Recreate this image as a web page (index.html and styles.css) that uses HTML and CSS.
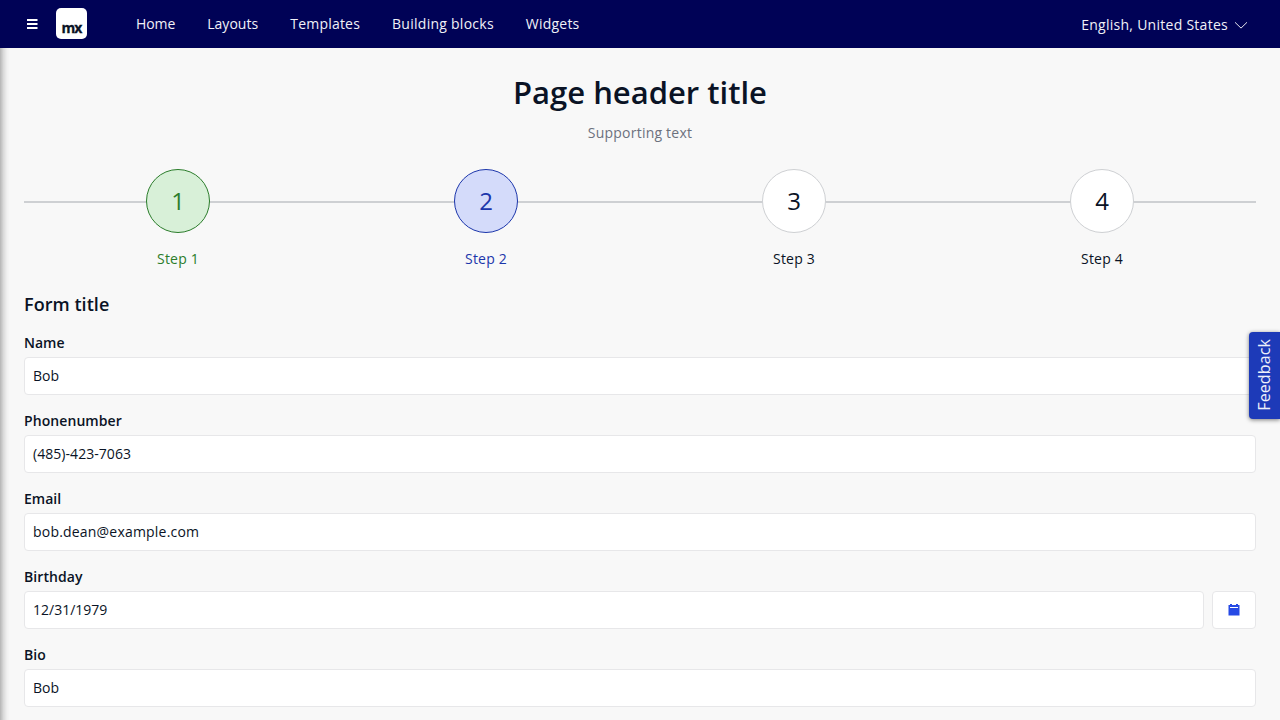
FILE: index.html
```html
<!DOCTYPE html>
<html lang="en">
<head>
<meta charset="utf-8">
<title>Page header title</title>
<link rel="stylesheet" href="styles.css">
</head>
<body>
<header class="topbar">
  <button class="menu-toggle" aria-label="Menu"><svg width="12" height="12" viewBox="0 0 12 12"><path d="M1 2h10.500M1 6h10.500M1 10h10.500" stroke="#fff" stroke-width="2"/></svg></button>
  <a class="logo"><span class="logo-text">mx</span></a>
  <nav class="nav"><a class="nav-home">Home</a><a class="nav-layouts">Layouts</a><a>Templates</a><a class="nav-blocks">Building blocks</a><a>Widgets</a></nav>
  <div class="language"><span>English, United States</span><svg width="14" height="14" viewBox="0 0 14 14"><path d="M1 4.300l6 5.800 6-5.800" fill="none" stroke="#fff" stroke-width="0.9"/></svg></div>
</header>
<main class="page">
  <div class="page-header">
    <h1 class="title">Page header title</h1>
    <p class="subtitle">Supporting text</p>
  </div>
  <div class="wizard">
    <div class="step step-done"><span class="circle">1</span><span class="step-label">Step 1</span></div>
    <div class="step step-active"><span class="circle">2</span><span class="step-label">Step 2</span></div>
    <div class="step"><span class="circle">3</span><span class="step-label">Step 3</span></div>
    <div class="step"><span class="circle">4</span><span class="step-label">Step 4</span></div>
  </div>
  <h2 class="form-title">Form title</h2>
  <form class="form">
    <div class="field"><label class="label">Name</label><div class="control">Bob</div></div>
    <div class="field"><label class="label label-phone">Phonenumber</label><div class="control control-phone">(485)-423-7063</div></div>
    <div class="field"><label class="label">Email</label><div class="control control-email">bob.dean@example.com</div></div>
    <div class="field"><label class="label label-phone">Birthday</label>
      <div class="control-row"><div class="control">12/31/1979</div><button type="button" class="date-button" aria-label="Show calendar"><svg width="14" height="14" viewBox="0 0 14 14"><path d="M1.500 2H3V1h2v1h4V1h2v1h1.500v10.500h-11z" fill="#264ae5"/><path d="M3 4.500h8" stroke="#fff" stroke-width="1"/></svg></button></div>
    </div>
    <div class="field"><label class="label">Bio</label><div class="control">Bob</div></div>
  </form>
</main>
<div class="edge-shadow"></div>
<button class="feedback"><span class="feedback-text">Feedback</span></button>
</body>
</html>
```
FILE: styles.css
```css
* { box-sizing: border-box; }
body {
  margin: 0;
  height: 720px;
  overflow: hidden;
  background: #f8f8f8;
  color: #0a1325;
  font: 14px/20px "Open Sans", sans-serif;
}
button { padding: 0; border: 0; background: none; font: inherit; }
svg { display: block; }
.topbar {
  display: flex;
  align-items: center;
  height: 48px;
  padding: 0 32px 0 26px;
  background: #000256;
  color: #f0f1f8;
}
.menu-toggle { width: 12px; margin-right: 18px; }
.logo {
  display: flex;
  align-items: flex-end;
  justify-content: center;
  width: 31px;
  height: 31px;
  margin: 0 49px 1px 0;
  padding-bottom: 1px;
  border-radius: 5px;
  background: #fff;
  color: #0a1325;
}
.logo-text { font-size: 14px; font-weight: 700; line-height: 21px; letter-spacing: -0.9px; -webkit-text-stroke: 0.3px #0a1325; }
.nav { display: flex; gap: 32px; letter-spacing: 0.21px; }
.nav-home { letter-spacing: -0.1px; }
.nav-layouts { letter-spacing: 0.04px; }
.nav-blocks { letter-spacing: 0.26px; }
.language { display: flex; align-items: center; gap: 6px; margin-left: auto; padding-top: 2px; letter-spacing: 0.27px; }
.page { padding: 24px 24px 0; }
.page-header { text-align: center; }
.title { margin: 0 0 10px; font-size: 31px; line-height: 41px; font-weight: 600; }
.subtitle { margin: 0 0 26px; color: #6c717e; letter-spacing: 0.22px; }
.wizard {
  display: grid;
  grid-template-columns: repeat(4, 1fr);
  height: 100px;
  margin-bottom: 22px;
  background: linear-gradient(#ced0d3, #ced0d3) 0 32px / 100% 2px no-repeat;
}
.step { display: flex; flex-direction: column; align-items: center; gap: 16px; }
.circle {
  display: flex;
  align-items: center;
  justify-content: center;
  width: 64px;
  height: 64px;
  border: 1px solid #ced0d3;
  border-radius: 50%;
  background: #fff;
  font-size: 24px;
}
.step-label { letter-spacing: 0.2px; }
.step-done { color: #2b7d2b; }
.step-done .circle { border-color: #2b7d2b; background: #d8f0d8; }
.step-active { color: #1c36ab; }
.step-active .circle { border-color: #1c36ab; background: #d4dbfa; }
.form-title { margin: 0 0 16px; font-size: 18px; line-height: 26px; font-weight: 600; letter-spacing: 0.05px; }
.form { display: flex; flex-direction: column; gap: 16px; }
.field { display: flex; flex-direction: column; gap: 4px; }
.label { font-weight: 600; }
.label-phone { letter-spacing: 0.08px; }
.control {
  flex: 1;
  height: 38px;
  padding: 8px;
  border: 1px solid #e7e7e9;
  border-radius: 4px;
  background: #fff;
}
.control-phone { letter-spacing: 0.05px; }
.control-email { letter-spacing: 0.2px; }
.field > .control { flex: none; }
.control-row { display: flex; gap: 8px; }
.date-button {
  display: flex;
  align-items: center;
  justify-content: center;
  width: 44px;
  height: 38px;
  border: 1px solid #e7e7e9;
  border-radius: 4px;
  background: #fff;
}
.edge-shadow {
  position: absolute;
  top: 48px;
  bottom: 0;
  left: 0;
  width: 10px;
  background: linear-gradient(90deg, rgba(0,0,0,0.27), rgba(0,0,0,0.12) 35%, rgba(0,0,0,0.03) 70%, transparent);
}
.feedback {
  position: absolute;
  top: 332px;
  right: 0;
  display: flex;
  align-items: center;
  justify-content: center;
  width: 31px;
  height: 87px;
  padding: 0 1px 1px 0;
  border-radius: 4px 0 0 4px;
  background: #1d3ab8;
  color: #eef0fa;
  box-shadow: 0 1px 4px rgba(0,0,0,0.5);
}
.feedback-text { writing-mode: vertical-rl; transform: rotate(180deg); font-size: 16px; line-height: 24px; letter-spacing: 0.12px; }
```
